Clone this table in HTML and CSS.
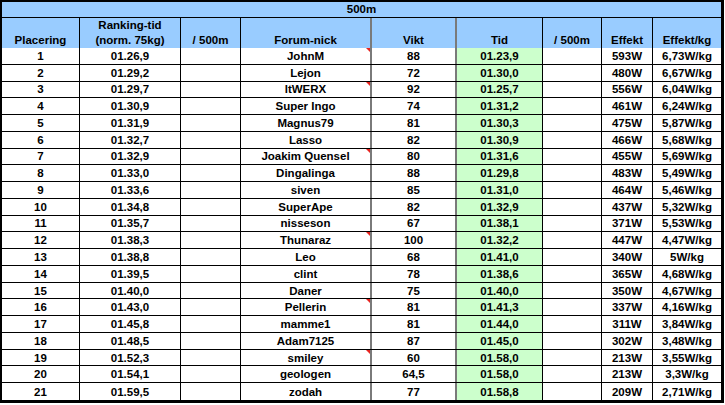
FILE: index.html
```html
<!DOCTYPE html>
<html lang="sv">
<head>
<meta charset="utf-8">
<title>500m</title>
<link rel="stylesheet" href="styles.css">
</head>
<body>
<div class="sheet">
  <div class="title">500m</div>
  <div class="row head">
    <div>Placering</div>
    <div>Ranking-tid<br>(norm. 75kg)</div>
    <div>/ 500m</div>
    <div>Forum-nick</div>
    <div>Vikt</div>
    <div>Tid</div>
    <div>/ 500m</div>
    <div>Effekt</div>
    <div>Effekt/kg</div>
  </div>
  <div class="body">
    <div class="row"><div>1</div><div>01.26,9</div><div></div><div class="note">JohnM</div><div>88</div><div class="tid">01.23,9</div><div></div><div>593W</div><div>6,73W/kg</div></div>
    <div class="row"><div>2</div><div>01.29,2</div><div></div><div>Lejon</div><div>72</div><div class="tid">01.30,0</div><div></div><div>480W</div><div>6,67W/kg</div></div>
    <div class="row"><div>3</div><div>01.29,7</div><div></div><div class="note">ltWERX</div><div>92</div><div class="tid">01.25,7</div><div></div><div>556W</div><div>6,04W/kg</div></div>
    <div class="row"><div>4</div><div>01.30,9</div><div></div><div>Super Ingo</div><div>74</div><div class="tid">01.31,2</div><div></div><div>461W</div><div>6,24W/kg</div></div>
    <div class="row"><div>5</div><div>01.31,9</div><div></div><div>Magnus79</div><div>81</div><div class="tid">01.30,3</div><div></div><div>475W</div><div>5,87W/kg</div></div>
    <div class="row"><div>6</div><div>01.32,7</div><div></div><div>Lasso</div><div>82</div><div class="tid">01.30,9</div><div></div><div>466W</div><div>5,68W/kg</div></div>
    <div class="row"><div>7</div><div>01.32,9</div><div></div><div class="note">Joakim Quensel</div><div>80</div><div class="tid">01.31,6</div><div></div><div>455W</div><div>5,69W/kg</div></div>
    <div class="row"><div>8</div><div>01.33,0</div><div></div><div>Dingalinga</div><div>88</div><div class="tid">01.29,8</div><div></div><div>483W</div><div>5,49W/kg</div></div>
    <div class="row"><div>9</div><div>01.33,6</div><div></div><div>siven</div><div>85</div><div class="tid">01.31,0</div><div></div><div>464W</div><div>5,46W/kg</div></div>
    <div class="row"><div>10</div><div>01.34,8</div><div></div><div>SuperApe</div><div>82</div><div class="tid">01.32,9</div><div></div><div>437W</div><div>5,32W/kg</div></div>
    <div class="row"><div>11</div><div>01.35,7</div><div></div><div>nisseson</div><div>67</div><div class="tid">01.38,1</div><div></div><div>371W</div><div>5,53W/kg</div></div>
    <div class="row"><div>12</div><div>01.38,3</div><div></div><div class="note">Thunaraz</div><div>100</div><div class="tid">01.32,2</div><div></div><div>447W</div><div>4,47W/kg</div></div>
    <div class="row"><div>13</div><div>01.38,8</div><div></div><div>Leo</div><div>68</div><div class="tid">01.41,0</div><div></div><div>340W</div><div>5W/kg</div></div>
    <div class="row"><div>14</div><div>01.39,5</div><div></div><div>clint</div><div>78</div><div class="tid">01.38,6</div><div></div><div>365W</div><div>4,68W/kg</div></div>
    <div class="row"><div>15</div><div>01.40,0</div><div></div><div>Daner</div><div>75</div><div class="tid">01.40,0</div><div></div><div>350W</div><div>4,67W/kg</div></div>
    <div class="row"><div>16</div><div>01.43,0</div><div></div><div class="note">Pellerin</div><div>81</div><div class="tid">01.41,3</div><div></div><div>337W</div><div>4,16W/kg</div></div>
    <div class="row"><div>17</div><div>01.45,8</div><div></div><div>mamme1</div><div>81</div><div class="tid">01.44,0</div><div></div><div>311W</div><div>3,84W/kg</div></div>
    <div class="row"><div>18</div><div>01.48,5</div><div></div><div>Adam7125</div><div>87</div><div class="tid">01.45,0</div><div></div><div>302W</div><div>3,48W/kg</div></div>
    <div class="row"><div>19</div><div>01.52,3</div><div></div><div class="note">smiley</div><div>60</div><div class="tid">01.58,0</div><div></div><div>213W</div><div>3,55W/kg</div></div>
    <div class="row"><div>20</div><div>01.54,1</div><div></div><div>geologen</div><div>64,5</div><div class="tid">01.58,0</div><div></div><div>213W</div><div>3,3W/kg</div></div>
    <div class="row"><div>21</div><div>01.59,5</div><div></div><div>zodah</div><div>77</div><div class="tid">01.58,8</div><div></div><div>209W</div><div>2,71W/kg</div></div>
  </div>
</div>
</body>
</html>
```
FILE: styles.css
```css
html, body {
  margin: 0;
  padding: 0;
  background: #fff;
}

body {
  font-family: "Liberation Sans", Arial, sans-serif;
  font-size: 11.5px;
  font-weight: bold;
  color: #000;
}

.sheet {
  width: 724px;
  box-sizing: border-box;
  border-style: solid;
  border-color: #000;
  border-width: 2px 3px 3px 2px;
}

.title {
  height: 16px;
  box-sizing: border-box;
  border-bottom: 1px solid #000;
  background: #99ccff;
  text-align: center;
  line-height: 15px;
}

.row {
  display: grid;
  grid-template-columns: 78px 101px 60px 131px 85px 86px 59px 51px 68px;
  box-sizing: border-box;
  border-bottom: 1px solid #000;
}

.row > div {
  box-sizing: border-box;
  border-right: 1px solid #000;
  display: flex;
  align-items: center;
  justify-content: center;
  text-align: center;
  white-space: nowrap;
  background: #fff;
  position: relative;
}

.row > div:nth-child(4),
.row > div:nth-child(5) {
  border-right: 2px solid #7a7a7a;
}

.row > div:last-child {
  border-right: 0;
}

.head {
  height: 30px;
}

.head > div {
  background: #99ccff;
  align-items: flex-end;
  line-height: 15px;
  padding-bottom: 0;
}

.body {
  height: 352px;
  display: grid;
  grid-template-rows: repeat(21, 1fr);
}

.body .row:last-child {
  border-bottom: 0;
}

.row > div.tid {
  background: #ccffcc;
}

.note::after {
  content: "";
  position: absolute;
  top: 0;
  right: 0;
  width: 0;
  height: 0;
  border-top: 4px solid #e8231f;
  border-left: 4px solid transparent;
}
```
